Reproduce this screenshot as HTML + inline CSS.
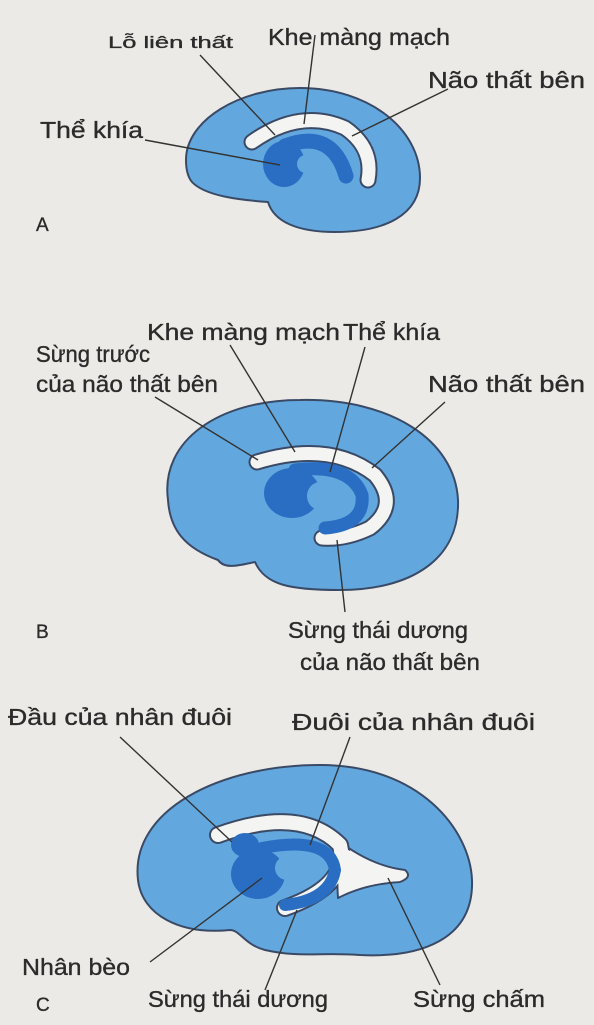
<!DOCTYPE html>
<html><head><meta charset="utf-8"><style>
html,body{margin:0;padding:0;background:#ebeae6;}
svg{display:block}
text{font-family:"Liberation Sans",sans-serif;font-size:23px;fill:#2b2b2b;stroke:#2b2b2b;stroke-width:0.35}
</style></head><body>
<svg width="594" height="1025" viewBox="0 0 594 1025" xmlns="http://www.w3.org/2000/svg">
<rect width="594" height="1025" fill="#ebeae6"/>
<g stroke="#3a4a66" stroke-width="2" stroke-linejoin="round" stroke-linecap="round">
<!-- A -->
<path d="M186,160 C186,120 240,88 300,88 C370,88 420,130 420,178 C420,215 385,232 335,232 C298,232 274,222 268,202 C240,200 205,196 192,182 C187,176 186,168 186,160 Z" fill="#62a8df"/>
<path d="M252,142 Q300,108 345,128 Q374,148 368,180" fill="none" stroke="#3a4a66" stroke-width="17"/>
<path d="M252,142 Q300,108 345,128 Q374,148 368,180" fill="none" stroke="#f4f4f2" stroke-width="13"/>
<path d="M285,146 Q332,128 346,176" fill="none" stroke="#2a6ec4" stroke-width="15"/>
<ellipse cx="284" cy="164" rx="21" ry="23" fill="#2a6ec4" stroke="none"/>
<circle cx="306" cy="164" r="9" fill="#62a8df" stroke="none"/>
<!-- B -->
<path d="M168,500 C160,440 220,400 300,400 C390,398 455,440 458,500 C460,560 410,590 340,590 C290,590 265,585 255,562 C240,565 225,570 218,560 C185,548 170,530 168,500 Z" fill="#62a8df"/>
<path d="M257,462 Q330,440 375,475 Q400,505 370,528 Q345,540 322,538" fill="none" stroke="#3a4a66" stroke-width="17"/>
<path d="M257,462 Q330,440 375,475 Q400,505 370,528 Q345,540 322,538" fill="none" stroke="#f4f4f2" stroke-width="13"/>
<path d="M295,470 Q350,463 362,495 Q365,525 325,528" fill="none" stroke="#2a6ec4" stroke-width="13"/>
<ellipse cx="292" cy="493" rx="28" ry="25" fill="#2a6ec4" stroke="none"/>
<ellipse cx="320" cy="496" rx="13" ry="14" fill="#62a8df" stroke="none"/>
<!-- C -->
<path d="M138,880 C130,810 220,765 320,765 C420,765 470,830 472,880 C474,940 420,958 360,955 C320,952 300,958 265,950 C245,945 240,930 230,930 C180,935 142,915 138,880 Z" fill="#62a8df"/>
<path d="M335,838 Q370,866 405,870 Q413,877 400,882 Q365,884 338,898 Z" fill="#f4f4f2"/>
<path d="M218,835 Q300,805 340,845 Q350,885 285,908" fill="none" stroke="#3a4a66" stroke-width="18"/>
<path d="M218,835 Q300,805 340,845 Q350,885 285,908" fill="none" stroke="#f4f4f2" stroke-width="14"/>
<path d="M336,842 Q370,866 404,871 L400,881 Q365,883 339,896 Z" fill="#f4f4f2" stroke="none"/>
<path d="M262,848 Q330,835 335,870 Q330,900 285,905" fill="none" stroke="#2a6ec4" stroke-width="12"/>
<ellipse cx="258" cy="874" rx="27" ry="25" fill="#2a6ec4" stroke="none"/>
<ellipse cx="245" cy="845" rx="14" ry="12" fill="#2a6ec4" stroke="none"/>
<circle cx="287" cy="868" r="12" fill="#62a8df" stroke="none"/>
</g>
<g stroke="#333" stroke-width="1.4">
<line x1="200" y1="55" x2="275" y2="135"/>
<line x1="315" y1="35" x2="304" y2="124"/>
<line x1="448" y1="89" x2="352" y2="136"/>
<line x1="145" y1="140" x2="280" y2="165"/>
<line x1="230" y1="345" x2="295" y2="452"/>
<line x1="365" y1="347" x2="330" y2="472"/>
<line x1="155" y1="397" x2="258" y2="460"/>
<line x1="445" y1="402" x2="372" y2="468"/>
<line x1="337" y1="540" x2="345" y2="612"/>
<line x1="120" y1="737" x2="232" y2="842"/>
<line x1="350" y1="737" x2="310" y2="845"/>
<line x1="150" y1="962" x2="262" y2="878"/>
<line x1="265" y1="990" x2="297" y2="910"/>
<line x1="440" y1="985" x2="388" y2="878"/>
</g>
<g>
<text x="108" y="48" style="font-size:17px" textLength="125" lengthAdjust="spacingAndGlyphs">Lỗ liên thất</text>
<text x="268" y="45" textLength="182" lengthAdjust="spacingAndGlyphs">Khe màng mạch</text>
<text x="428" y="88" textLength="157" lengthAdjust="spacingAndGlyphs">Não thất bên</text>
<text x="40" y="138" textLength="103" lengthAdjust="spacingAndGlyphs">Thể khía</text>
<text x="36" y="231" style="font-size:19px">A</text>
<text x="147" y="340" textLength="193" lengthAdjust="spacingAndGlyphs">Khe màng mạch</text>
<text x="343" y="340" textLength="97" lengthAdjust="spacingAndGlyphs">Thể khía</text>
<text x="36" y="362" textLength="114" lengthAdjust="spacingAndGlyphs">Sừng trước</text>
<text x="36" y="392" textLength="182" lengthAdjust="spacingAndGlyphs">của não thất bên</text>
<text x="428" y="392" textLength="157" lengthAdjust="spacingAndGlyphs">Não thất bên</text>
<text x="36" y="638" style="font-size:19px">B</text>
<text x="288" y="638" textLength="180" lengthAdjust="spacingAndGlyphs">Sừng thái dương</text>
<text x="300" y="670" textLength="180" lengthAdjust="spacingAndGlyphs">của não thất bên</text>
<text x="8" y="725" textLength="224" lengthAdjust="spacingAndGlyphs">Đầu của nhân đuôi</text>
<text x="292" y="730" textLength="243" lengthAdjust="spacingAndGlyphs">Đuôi của nhân đuôi</text>
<text x="22" y="975" textLength="108" lengthAdjust="spacingAndGlyphs">Nhân bèo</text>
<text x="36" y="1011" style="font-size:19px">C</text>
<text x="148" y="1007" textLength="180" lengthAdjust="spacingAndGlyphs">Sừng thái dương</text>
<text x="413" y="1007" textLength="132" lengthAdjust="spacingAndGlyphs">Sừng chấm</text>
</g>
</svg>
</body></html>
